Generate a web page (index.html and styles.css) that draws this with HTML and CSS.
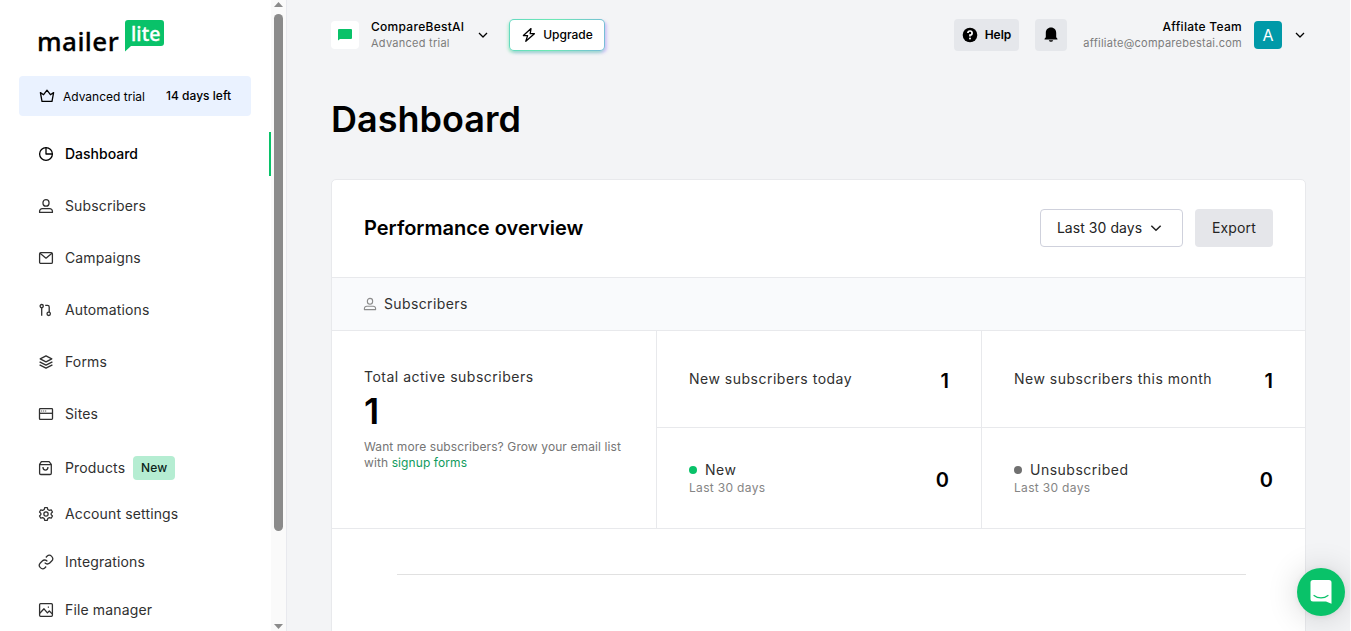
FILE: index.html
```html
<!DOCTYPE html>
<html lang="en">
<head>
<meta charset="utf-8">
<title>Dashboard</title>
<link rel="stylesheet" href="styles.css">
</head>
<body>
<svg width="0" height="0" class="defs" aria-hidden="true">
  <symbol id="user" viewBox="0 0 16 16"><rect x="5" y="1.600" width="6" height="6.600" rx="3"/><path d="M1.600 14.400v-1.100a2.700 2.700 0 0 1 2.700-2.700h7.400a2.700 2.700 0 0 1 2.700 2.700v1.100z"/></symbol>
  <symbol id="chevron" viewBox="0 0 12 12"><path d="M2 4l4 4 4-4"/></symbol>
</svg>
<div class="app">
  <aside class="sidebar">
    <div class="side-content">
      <div class="logo">
        <span class="logo-word">mailer</span>
        <span class="logo-bubble"><svg class="logo-shape" width="39" height="32" viewBox="0 0 39 32"><path d="M3 0h33a3 3 0 0 1 3 3v20a3 3 0 0 1-3 3H6L0 31.500V3a3 3 0 0 1 3-3z"/></svg><span class="logo-lite">lite</span></span>
      </div>
      <div class="trial">
        <svg class="icon crown" width="16" height="16" viewBox="0 0 16 16"><path d="M1.400 4.600l3.200 2.100L8 2.200l3.400 4.500 3.200-2.100-1.600 8.800H3z"/></svg>
        <span class="trial-plan">Advanced trial</span>
        <span class="trial-days">14 days left</span>
      </div>
      <nav class="nav">
        <a class="item active"><svg class="icon" width="16" height="16" viewBox="0 0 16 16"><circle cx="8" cy="8" r="6.400"/><path d="M8 1.600V8h6.400"/></svg><span>Dashboard</span></a>
        <a class="item"><svg class="icon" width="16" height="16"><use href="#user"/></svg><span>Subscribers</span></a>
        <a class="item"><svg class="icon" width="16" height="16" viewBox="0 0 16 16"><rect x="1.600" y="2.700" width="12.800" height="10.700" rx="1.200"/><path d="M2 3.200l6 5 6-5"/></svg><span>Campaigns</span></a>
        <a class="item"><svg class="icon" width="16" height="16" viewBox="0 0 16 16"><circle cx="3.700" cy="4.100" r="1.600"/><path d="M3.700 5.800v8M7.200 3.400h2.400a1.600 1.600 0 0 1 1.600 1.600v4.900"/><circle cx="10.700" cy="11.800" r="1.700"/></svg><span>Automations</span></a>
        <a class="item"><svg class="icon" width="16" height="16" viewBox="0 0 16 16"><path d="M8 1.800l5.800 3L8 7.800 2.200 4.800zM1.600 7.900L8 11.200l6.400-3.300M1.600 10.900L8 14.200l6.400-3.300"/></svg><span>Forms</span></a>
        <a class="item"><svg class="icon" width="16" height="16" viewBox="0 0 16 16"><rect x="1.500" y="2.700" width="13" height="10.700" rx=".8"/><path d="M1.500 7.300h13"/><path class="thin" d="M3.200 5h1M5.200 5h1M7.200 5h1"/></svg><span>Sites</span></a>
        <a class="item tall"><svg class="icon" width="16" height="16" viewBox="0 0 16 16"><path d="M3.400 1.700h7.700l2.200 2.700v8.800a1.300 1.300 0 0 1-1.300 1.300H2.900a1.300 1.300 0 0 1-1.300-1.300V4.400zM1.600 4.700h11.700M5 7v.6a2.450 2.450 0 0 0 4.900 0V7"/></svg><span>Products</span><span class="badge">New</span></a>
        <a class="item low"><svg class="icon" width="16" height="16" viewBox="0 0 24 24"><path class="wide" d="M10 2.500h4l.7 2.800 2.200 1.200 2.900-.8 1.900 3.300L19.700 11v2l2 2-1.900 3.300-2.900-.8-2.200 1.200-.7 2.800h-4l-.7-2.800-2.200-1.200-2.900.8L2.300 15l2-2v-2l-2-2 1.900-3.300 2.900.8 2.200-1.200z"/><circle class="wide" cx="12" cy="12" r="3.200"/></svg><span>Account settings</span></a>
        <a class="item low"><svg class="icon" width="16" height="16" viewBox="0 0 24 24"><path class="wide" d="M10 13a5 5 0 0 0 7.540.540l3-3a5 5 0 0 0-7.070-7.070l-1.720 1.710"/><path class="wide" d="M14 11a5 5 0 0 0-7.540-.540l-3 3a5 5 0 0 0 7.070 7.070l1.710-1.710"/></svg><span>Integrations</span></a>
        <a class="item low"><svg class="icon" width="16" height="16" viewBox="0 0 16 16"><rect x="1.600" y="1.700" width="12.800" height="12.600" rx="1"/><path d="M1.800 11.200L6 6.800l3.400 4.100 1.900-1.900 2.900 2.900"/><path d="M9.800 5.200h1.200"/></svg><span>File manager</span></a>
      </nav>
    </div>
    <div class="scrollbar">
      <svg width="9" height="5" viewBox="0 0 9 5"><path d="M4.500 0L9 5H0z"/></svg>
      <div class="thumb"></div>
      <svg width="9" height="5" viewBox="0 0 9 5"><path d="M0 0h9L4.500 5z"/></svg>
    </div>
  </aside>
  <main class="main">
    <header class="topbar">
      <div class="workspace">
        <span class="workspace-icon"><svg width="14" height="12" viewBox="0 0 14 12"><path d="M1 0h12a1 1 0 0 1 1 1v8a1 1 0 0 1-1 1H2l-2 1.600V1a1 1 0 0 1 1-1z"/></svg></span>
        <div class="two"><b>CompareBestAI</b><small class="plan">Advanced trial</small></div>
        <svg class="icon dark chev" width="12" height="12"><use href="#chevron"/></svg>
      </div>
      <button class="upgrade"><svg class="icon dark" width="16" height="16" viewBox="0 0 16 16"><path d="M10 1.600L2.400 8.600h4.200l-1.800 5.700 8.600-7.600H9.200z"/></svg><span>Upgrade</span></button>
      <div class="actions">
        <button class="soft help"><svg width="16" height="16" viewBox="0 0 16 16"><circle cx="8" cy="8" r="7.300"/><path class="question" d="M5.900 6.100A2.100 2.100 0 1 1 8 8.200v1.200"/><circle class="dot" cx="8" cy="11.600" r="1"/></svg><span>Help</span></button>
        <button class="soft bell"><svg width="14" height="16" viewBox="0 0 14 16"><path d="M7 .6c3.200 0 5.200 2.300 5.200 5.300v4.300l1.200 1.500c.3.500.1.800-.4.800H1c-.5 0-.7-.3-.4-.8l1.200-1.500V5.900C1.800 2.900 3.800.6 7 .6zM4.800 13.200h4.400a2.300 2.300 0 0 1-4.400 0z"/></svg></button>
        <div class="two right"><b>Affilate Team</b><small>affiliate@comparebestai.com</small></div>
        <span class="avatar">A</span>
        <svg class="icon dark" width="12" height="12"><use href="#chevron"/></svg>
      </div>
    </header>
    <h1>Dashboard</h1>
    <section class="card">
      <div class="card-head">
        <h2>Performance overview</h2>
        <button class="select">Last 30 days<svg class="icon" width="14" height="14" viewBox="0 0 12 12"><path d="M2 4l4 4 4-4"/></svg></button>
        <button class="export">Export</button>
      </div>
      <div class="strip"><svg class="icon grey" width="14" height="14"><use href="#user"/></svg><span>Subscribers</span></div>
      <div class="stats">
        <div class="total">
          <div class="label">Total active subscribers</div>
          <div class="big">1</div>
          <p>Want more subscribers? Grow your email list<br>with <a>signup forms</a></p>
        </div>
        <div class="stat"><div class="label">New subscribers today</div><strong>1</strong></div>
        <div class="stat last"><div class="label">New subscribers this month</div><strong>1</strong></div>
        <div class="stat lower"><div><div class="label key"><i class="green"></i>New</div><small>Last 30 days</small></div><strong>0</strong></div>
        <div class="stat lower last"><div><div class="label key"><i></i>Unsubscribed</div><small>Last 30 days</small></div><strong>0</strong></div>
      </div>
      <div class="chart"><div class="gridline"></div></div>
    </section>
  </main>
</div>
<button class="chat"><svg width="24" height="26" viewBox="0 0 24 26"><path d="M4 1h16a2.500 2.500 0 0 1 2.500 2.500v21.200L17 22.500H4A2.500 2.500 0 0 1 1.500 20V3.500A2.500 2.500 0 0 1 4 1z"/><path class="smile" d="M5 16.500c4 3.200 10 3.200 14 0"/></svg></button>
</body>
</html>
```
FILE: styles.css
```css
* { box-sizing: border-box; }
body { margin: 0; height: 631px; overflow: hidden; background: #fff; color: #000; font-family: Inter, "Liberation Sans", sans-serif; font-size: 14px; }
h1, h2, p { margin: 0; }
button { border: 0; margin: 0; padding: 0; font: inherit; color: inherit; }
svg { flex: none; display: block; }
.defs { position: absolute; }
.icon { fill: none; stroke: currentColor; stroke-width: 1.3; stroke-linejoin: round; }
.icon .wide { stroke-width: 1.9; }
.icon .thin { stroke-width: 1; }
.app { display: flex; width: 1350px; height: 631px; }

.sidebar { width: 287px; flex: none; display: flex; border-right: 1px solid #e8e9ee; overflow: hidden; }
.side-content { width: 271px; }
.scrollbar { width: 15px; height: 631px; background: #fafafa; display: flex; flex-direction: column; align-items: center; justify-content: space-between; padding: 2px 0; fill: #8b8b8b; }
.thumb { width: 9px; height: 517px; margin: 7px 0 auto; border-radius: 5px; background: #8b8b8b; }
.logo { height: 76px; padding: 20px 0 0 37px; display: flex; }
.logo-word { width: 88px; padding-top: 3px; font: 500 26px/36px "Noto Sans", sans-serif; letter-spacing: .45px; -webkit-text-stroke: .3px #000; }
.logo-bubble { position: relative; width: 39px; height: 32px; fill: #09c269; }
.logo-lite { position: absolute; left: 6px; top: 0; color: #fff; font: 500 19.500px/27px "Noto Sans", sans-serif; letter-spacing: .1px; -webkit-text-stroke: .3px #fff; }
.trial { margin-left: 19px; width: 232px; height: 40px; border-radius: 4px; background: #eaf2ff; display: flex; align-items: center; padding-left: 20px; font-size: 12px; }
.trial-plan { margin-left: 8px; width: 103px; }
.trial-days { font-weight: 500; padding-bottom: 2px; letter-spacing: .02px; }
.nav { padding-top: 16px; display: flex; flex-direction: column; }
.item { height: 44px; flex: none; margin-bottom: 8px; padding-left: 38px; display: flex; align-items: center; color: #303030; font-weight: 400; letter-spacing: .14px; }
.item > span { padding-bottom: 2px; }
.item .icon { margin-right: 11px; }
.item.active { color: #000; border-right: 2px solid #09c269; font-weight: 500; letter-spacing: 0; }
.item.tall { height: 48px; margin: 0; }
.item.low { margin-bottom: 4px; }
.item .badge { margin-left: 8px; padding: 0; width: 42px; height: 24px; border-radius: 4px; background: #b5edd2; color: #0a2318; font-size: 12px; font-weight: 500; line-height: 24px; text-align: center; }

.main { flex: 1; background: #f3f4f6; padding: 19px 44px 0; overflow: hidden; }
.topbar { display: flex; height: 32px; align-items: center; }
.workspace { display: flex; align-items: center; width: 178px; }
.workspace-icon { width: 28px; height: 28px; border-radius: 4px; background: #fff; fill: #09c269; display: flex; align-items: center; justify-content: center; }
.dark { color: #000; }
.two { display: flex; flex-direction: column; margin-left: 12px; line-height: 16px; }
.two b { font-size: 12px; font-weight: 500; letter-spacing: .28px; }
.two small { font-size: 11px; color: #7c7c7c; letter-spacing: .26px; white-space: nowrap; }
.chev { margin-left: 13px; }
.upgrade { width: 96px; height: 32px; border: 1.500px solid transparent; border-radius: 5px; background: linear-gradient(#fff, #fff) padding-box, linear-gradient(100deg, #64d9c1, #6ceab3 45%, #78bad9) border-box; box-shadow: -1px 2px 3px #77e8ae90, 2px 2px 3px #b496ff80; display: flex; align-items: center; justify-content: center; gap: 6px; font-size: 12px; font-weight: 500; letter-spacing: 0; }
.upgrade span, .help span { padding-bottom: 2px; }
.actions { display: flex; align-items: center; margin-left: auto; }
.soft { height: 32px; border-radius: 4px; background: #e5e7eb; display: flex; align-items: center; justify-content: center; }
.help { width: 65px; gap: 7px; font-size: 12px; font-weight: 600; }
.bell { width: 32px; margin-left: 16px; }
.question { fill: none; stroke: #fff; stroke-width: 1.700; }
.dot { fill: #fff; }
.right { margin-left: 16px; width: 159px; text-align: right; align-items: flex-end; }
.avatar { width: 28px; height: 28px; margin: 0 12px; border-radius: 4px; background: #0099a8; color: #fff; font-size: 16px; line-height: 28px; text-align: center; }
h1 { margin-top: 46px; height: 82px; font-size: 36px; line-height: 44px; font-weight: 600; }

.card { width: 975px; height: 600px; border: 1px solid #e8e9ec; border-radius: 5px; background: #fff; overflow: hidden; }
.card-head { height: 98px; padding: 0 32px 2px; display: flex; align-items: center; border-bottom: 1px solid #e8e9ec; }
h2 { flex: 1; font-size: 20px; line-height: 28px; font-weight: 600; }
.select, .export { height: 38px; border-radius: 4px; color: #242424; font-weight: 400; display: flex; align-items: center; justify-content: center; }
.select { width: 143px; border: 1px solid #cfd1dc; background: #fff; gap: 7px; padding-right: 3px; letter-spacing: .05px; }
.export { width: 78px; margin-left: 12px; background: #e5e6ea; letter-spacing: .15px; }
.strip { height: 53px; padding-left: 31px; display: flex; align-items: center; gap: 7px; background: #f9fafc; border-bottom: 1px solid #e8e9ec; color: #303030; letter-spacing: .38px; }
.strip span { padding-bottom: 2px; }
.grey { color: #8b8b8b; }
.stats { height: 198px; display: grid; grid-template-columns: 325px 325px 1fr; grid-template-rows: 97px 101px; }
.total { grid-row: 1 / 3; padding: 36px 0 0 32px; border-right: 1px solid #e8e9ec; border-bottom: 1px solid #e8e9ec; }
.label { font-weight: 400; line-height: 20px; letter-spacing: .5px; color: #303030; white-space: nowrap; }
.big { font-size: 36px; font-weight: 600; line-height: 44px; margin: 2px 0 6px; }
.total p { font-size: 12px; line-height: 16px; letter-spacing: .1px; color: #757575; }
.total a { color: #109b5d; }
.stat { display: flex; justify-content: space-between; align-items: center; padding: 0 32px; border-right: 1px solid #e8e9ec; border-bottom: 1px solid #e8e9ec; }
.stat.last { border-right: 0; }
.stat strong { font-size: 20px; font-weight: 600; line-height: 28px; padding-top: 4px; }
.stat small { display: block; font-size: 12px; line-height: 16px; letter-spacing: .32px; color: #858585; }
.key { display: flex; align-items: center; }
.key i { width: 8px; height: 8px; margin-right: 8px; border-radius: 50%; background: #707070; }
.key .green { background: #09c269; }
.chart { padding: 45px 59px 0 65px; }
.gridline { height: 1px; background: #e1e1e1; }
.chat { position: absolute; left: 1297px; top: 568px; width: 48px; height: 48px; border-radius: 50%; background: #09c269; box-shadow: 0 1px 6px #0000000f, 0 2px 32px #00000029; display: flex; align-items: center; justify-content: center; fill: #fff; }
.smile { fill: none; stroke: #09c269; stroke-width: 1.200; stroke-linecap: round; }
```
